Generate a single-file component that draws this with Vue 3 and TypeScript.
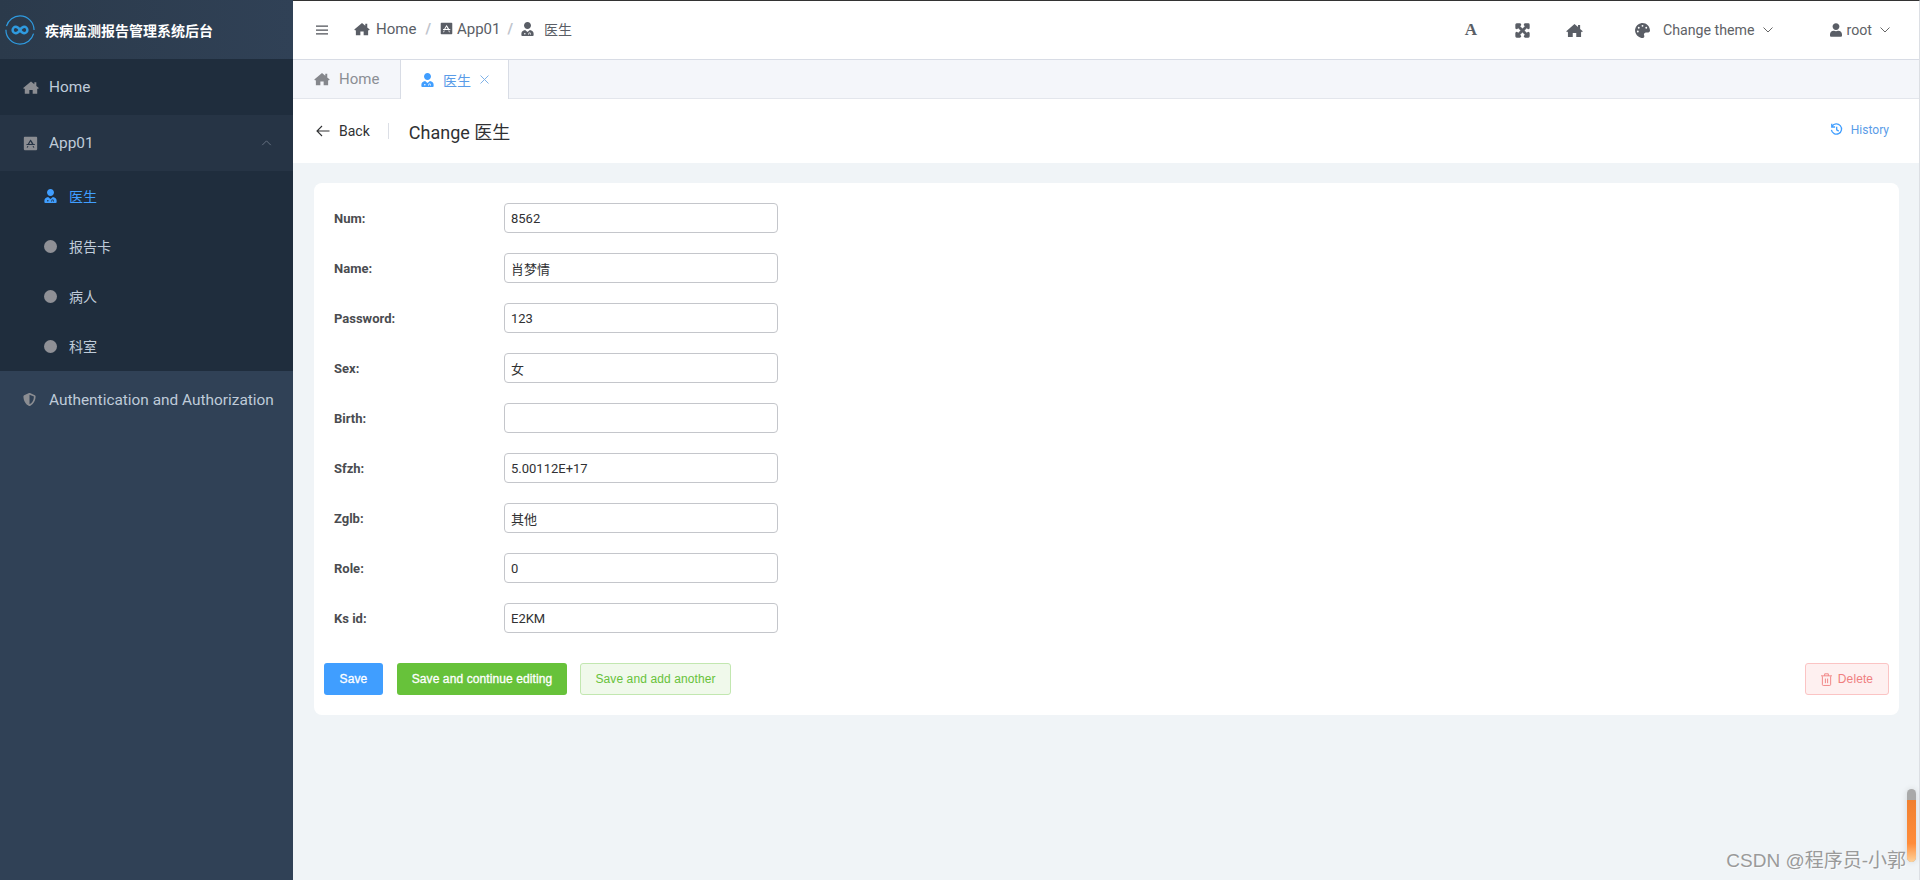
<script setup lang="ts">
const icons: Record<string, string> = {
  home: 'M288 36L6 278l30 35 28-24v191h164V344h120v136h164V289l28 24 30-35-90-77V64h-72v75z',
  user: 'M288 256c70.700 0 128-57.300 128-128S358.700 0 288 0 160 57.300 160 128s57.300 128 128 128zm89.600 32h-16.700c-22.200 10.200-46.900 16-72.900 16s-50.600-5.800-72.900-16h-16.700C124.200 288 64 348.200 64 422.400V464c0 26.500 21.500 48 48 48h352c26.500 0 48-21.500 48-48v-41.600c0-74.200-60.200-134.400-134.400-134.400z',
  doctor: 'M288 256c70.700 0 128-57.300 128-128S358.700 0 288 0 160 57.300 160 128s57.300 128 128 128zM200 296C120 310 64 360 64 430v50c0 18 14 32 32 32h384c18 0 32-14 32-32v-50c0-70-56-120-136-134l-88 74zM190 400a28 28 0 1 1 0 56 28 28 0 0 1 0-56zM320 470v-40c0-26 22-44 44-44s44 18 44 44v40h-24v-40c0-12-8-20-20-20s-20 8-20 20v40z',
  app: 'M64 32h448c18 0 32 14 32 32v448c0 18-14 32-32 32H64c-18 0-32-14-32-32V64c0-18 14-32 32-32zM288 130l-38 66-66 114h-50v40h320v-40h-50l-66-114zM288 210l52 100H236zM170 380l-30 70h36l34-70zM406 380h-40l34 70h36z',
  shield: 'M466.500 83.700l-192-80a48.150 48.150 0 0 0-36.900 0l-192 80C27.700 91.100 16 108.600 16 128c0 198.500 114.500 335.700 221.500 380.300 11.800 4.900 25.100 4.900 36.900 0C360.100 472.600 496 349.300 496 128c0-19.400-11.700-36.900-29.500-44.300zM256.100 446.300l-.1-381 175.900 73.300c-3.300 151.400-82.100 261.100-175.800 307.700z',
  expand: 'M448.100 344v112c0 13.300-10.700 24-24 24h-112c-21.400 0-32.100-25.900-17-41l36.200-36.200L224 295.600 116.800 402.900 153 439c15.100 15.100 4.400 41-17 41H24c-13.300 0-24-10.700-24-24V344c0-21.400 25.900-32.100 41-17l36.200 36.200L184.400 256 77.200 148.700 41 185c-15.100 15.100-41 4.400-41-17V56c0-13.300 10.700-24 24-24h112c21.400 0 32.100 25.900 17 41l-36.200 36.200L224 216.400l107.300-107.300L295.100 73c-15.100-15.100-4.400-41 17-41h112c13.300 0 24 10.700 24 24v112c0 21.400-25.900 32.100-41 17l-36.200-36.200L263.600 256l107.300 107.300 36.200-36.200c15.100-15.200 41-4.500 41 16.900z',
  palette: 'M204 5C104 24 24 104 6 203c-34 188 137 329 264 309 41-6 61-54 42-91-23-45 10-101 61-101h79c35 0 60-27 60-62C511 102 368-26 204 5zM96 320a32 32 0 1 1 0-64 32 32 0 0 1 0 64zm32-128a32 32 0 1 1 0-64 32 32 0 0 1 0 64zm128-64a32 32 0 1 1 0-64 32 32 0 0 1 0 64zm128 64a32 32 0 1 1 0-64 32 32 0 0 1 0 64z',
}

const subMenu = [
  { label: '医生', active: true },
  { label: '报告卡', active: false },
  { label: '病人', active: false },
  { label: '科室', active: false },
]

const fields = [
  { label: 'Num:', value: '8562' },
  { label: 'Name:', value: '肖梦情' },
  { label: 'Password:', value: '123' },
  { label: 'Sex:', value: '女' },
  { label: 'Birth:', value: '' },
  { label: 'Sfzh:', value: '5.00112E+17' },
  { label: 'Zglb:', value: '其他' },
  { label: 'Role:', value: '0' },
  { label: 'Ks id:', value: 'E2KM' },
]
</script>

<template>
  <div class="layout">
    <aside class="sidebar">
      <div class="logo">
        <svg class="logo-mark" viewBox="0 0 32 32" fill="none">
          <circle cx="16" cy="16" r="15" stroke="#2f9be0" stroke-width="1.300" stroke-dasharray="43 4.100" stroke-dashoffset="-4" />
          <path d="M16 16c-1.500-2.200-2.700-3.400-4.500-3.400a3.400 3.400 0 0 0 0 6.800c1.800 0 3-1.200 4.500-3.400s2.700-3.400 4.500-3.400a3.400 3.400 0 0 1 0 6.800c-1.800 0-3-1.200-4.500-3.400z" stroke="#2f9be0" stroke-width="2.600" />
        </svg>
        <span>疾病监测报告管理系统后台</span>
      </div>
      <div class="menu-item home">
        <svg class="menu-icon" viewBox="0 0 576 512"><path :d="icons.home" /></svg>
        <span>Home</span>
      </div>
      <div class="menu-item open">
        <svg class="menu-icon app" viewBox="0 0 576 576"><path :d="icons.app" fill-rule="evenodd" /></svg>
        <span>App01</span>
        <svg class="arrow" viewBox="0 0 12 7" fill="none"><path d="M1 6l5-5 5 5" stroke="#6f7b8a" /></svg>
      </div>
      <div class="submenu">
        <div v-for="item in subMenu" :key="item.label" class="sub-item" :class="{ active: item.active }">
          <svg v-if="item.active" class="sub-icon" viewBox="64 0 448 512"><path :d="icons.doctor" fill-rule="evenodd" /></svg>
          <i v-else class="dot"></i>
          <span>{{ item.label }}</span>
        </div>
      </div>
      <div class="menu-item auth">
        <svg class="menu-icon shield" viewBox="0 0 512 512"><path :d="icons.shield" /></svg>
        <span>Authentication and Authorization</span>
      </div>
    </aside>

    <main class="main">
      <header class="topbar">
        <svg class="burger" viewBox="0 0 12 12"><path d="M0 1.500h12v1.300H0zM0 5.400h12v1.300H0zM0 9.300h12v1.300H0z" /></svg>
        <nav class="crumbs">
          <svg class="crumb-icon" viewBox="0 0 576 512"><path :d="icons.home" /></svg>
          <span class="crumb-text">Home</span>
          <span class="sep first">/</span>
          <svg class="crumb-icon square" viewBox="0 0 576 576"><path :d="icons.app" fill-rule="evenodd" /></svg>
          <span class="crumb-text">App01</span>
          <span class="sep">/</span>
          <svg class="crumb-icon doc" viewBox="64 0 448 512"><path :d="icons.doctor" fill-rule="evenodd" /></svg>
          <span class="crumb-text cjk">医生</span>
        </nav>
        <div class="tools">
          <span class="font-a">A</span>
          <svg class="tool expand" viewBox="0 0 448 512"><path :d="icons.expand" /></svg>
          <svg class="tool house" viewBox="0 0 576 512"><path :d="icons.home" /></svg>
          <svg class="tool palette" viewBox="0 0 512 512"><path :d="icons.palette" fill-rule="evenodd" /></svg>
          <span class="tool-text">Change theme</span>
          <svg class="chev" viewBox="0 0 10 6" fill="none"><path d="M.5.500L5 5 9.500.500" stroke="#666" /></svg>
          <svg class="tool person" viewBox="64 0 448 512"><path :d="icons.user" /></svg>
          <span class="tool-text root">root</span>
          <svg class="chev" viewBox="0 0 10 6" fill="none"><path d="M.5.500L5 5 9.500.500" stroke="#666" /></svg>
        </div>
      </header>

      <div class="tabs">
        <div class="tab">
          <svg class="tab-icon" viewBox="0 0 576 512"><path :d="icons.home" /></svg>
          <span>Home</span>
        </div>
        <div class="tab current">
          <svg class="tab-icon small" viewBox="64 0 448 512"><path :d="icons.doctor" fill-rule="evenodd" /></svg>
          <span class="cjk">医生</span>
          <svg class="close" viewBox="0 0 9 9" fill="none"><path d="M.5.500l8 8M8.500.500l-8 8" stroke="#7fb2e8" /></svg>
        </div>
      </div>

      <div class="page-head">
        <svg class="back-arrow" viewBox="0 0 14 12" fill="none"><path d="M6 1L1 6l5 5M1 6h12.500" stroke="#303133" stroke-width="1.100" /></svg>
        <span class="back">Back</span>
        <i class="divider"></i>
        <span class="title">Change 医生</span>
        <div class="history">
          <svg class="history-icon" viewBox="0 0 14 14" fill="none">
            <path d="M2.300 3.500A5.500 5.500 0 1 1 1.500 7.500M5.500 4.300H1.900V.9M7.200 4v3.300l2.200 1.400" stroke="#409eff" stroke-width="1.400" />
          </svg>
          <span>History</span>
        </div>
      </div>

      <section class="content">
        <form class="card" @submit.prevent>
          <div v-for="field in fields" :key="field.label" class="row">
            <label>{{ field.label }}</label>
            <input type="text" :value="field.value" />
          </div>
          <div class="actions">
            <button class="btn primary">Save</button>
            <button class="btn success">Save and continue editing</button>
            <button class="btn plain">Save and add another</button>
            <button class="btn danger">
              <svg viewBox="0 0 12 14" fill="none"><path d="M1.500 3.500v9a1 1 0 0 0 1 1h7a1 1 0 0 0 1-1v-9M0 3h12M4 3V.8h4V3M4.800 6v5M7.200 6v5" stroke="#f07f7f" /></svg>
              <span>Delete</span>
            </button>
          </div>
        </form>
      </section>
    </main>

    <div class="scroll-widget"><i></i></div>
    <div class="watermark">CSDN @程序员-小郭</div>
  </div>
</template>

<style>
html,
body {
  margin: 0;
  height: 100%;
  overflow: hidden;
}
</style>

<style scoped>
.layout {
  display: flex;
  height: 880px;
  font-family: Roboto, "Noto Sans CJK SC", sans-serif;
  position: relative;
}

.sidebar {
  width: 293px;
  flex: none;
  background: #304156;
  color: #bfcbd9;
  font-size: 15.400px;
}

.logo {
  height: 59px;
  display: flex;
  align-items: center;
  padding-left: 5px;
  gap: 10px;
  background: linear-gradient(90deg, #2b3a4b, #304156);
  color: #fff;
  font-size: 14px;
  font-weight: 700;
}

.logo-mark {
  width: 30px;
  height: 30px;
}

.menu-item {
  height: 56px;
  display: flex;
  align-items: center;
  padding-left: 23px;
  box-sizing: border-box;
}

.menu-item.home {
  background: #1f2d3d;
}

.menu-item.open {
  background: #263445;
}

.menu-icon {
  width: 16px;
  height: 15px;
  fill: #8b8d92;
  margin-right: 10px;
  flex: none;
}

.menu-icon.app {
  width: 15px;
  height: 15px;
  margin-right: 11px;
}

.arrow {
  width: 11px;
  height: 6px;
  margin-left: auto;
  margin-right: 21px;
}

.submenu {
  background: #1f2d3d;
}

.sub-item {
  height: 50px;
  display: flex;
  align-items: center;
  padding-left: 44px;
  gap: 12px;
  font-size: 14px;
}

.sub-item.active {
  color: #409eff;
}

.sub-icon {
  width: 13px;
  height: 14px;
  fill: #409eff;
}

.dot {
  width: 13px;
  height: 13px;
  border-radius: 50%;
  background: #8f9096;
}

.menu-item.auth {
  height: 57px;
}

.shield {
  width: 13px;
  height: 13px;
  margin-right: 13px;
}

.main {
  flex: 1;
  min-width: 0;
  display: flex;
  flex-direction: column;
  background: #f0f4f7;
  border-top: 1px solid #333;
  border-right: 1px solid #dcdfe4;
}

.topbar {
  height: 58px;
  flex: none;
  display: flex;
  align-items: center;
  background: #fff;
  color: #5a5e66;
  border-bottom: 1px solid #d8dce5;
  padding-left: 23px;
}

.burger {
  width: 12px;
  height: 12px;
  fill: #4f5258;
}

.crumbs {
  display: flex;
  align-items: center;
  margin-left: 26px;
  font-size: 15px;
  margin-top: -3px;
}

.crumb-icon {
  width: 16px;
  height: 14px;
  fill: #5a5e66;
  margin-right: 6px;
}

.crumb-icon.square {
  width: 13px;
  height: 13px;
  margin-right: 4px;
}

.crumb-icon.doc {
  width: 13px;
  height: 14px;
  margin-right: 10px;
}

.crumb-text.cjk {
  font-size: 14px;
}

.sep {
  color: #c0c4cc;
  margin: 0 8px 0 7px;
  font-weight: 700;
}

.sep.first {
  margin: 0 9px;
}

.tools {
  margin-left: auto;
  display: flex;
  align-items: center;
  padding-right: 29px;
  font-size: 14.200px;
}

.font-a {
  font-family: "Liberation Serif", serif;
  font-weight: 700;
  font-size: 17px;
  color: #5a5e66;
  margin-right: 38px;
}

.tool {
  fill: #5a5e66;
  flex: none;
}

.expand {
  width: 15px;
  height: 15px;
  margin-right: 36px;
  stroke: #5a5e66;
  stroke-width: 40px;
}

.house {
  width: 17px;
  height: 15px;
  margin-right: 52px;
}

.palette {
  width: 15px;
  height: 15px;
  margin-right: 13px;
}

.tool-text {
  color: #606266;
}

.chev {
  width: 10px;
  height: 6px;
  margin-left: 8px;
}

.person {
  width: 12px;
  height: 14px;
  margin-left: 57px;
  margin-right: 5px;
}

.tabs {
  height: 38px;
  flex: none;
  display: flex;
  background: #f4f6fa;
  border-bottom: 1px solid #e3e6ec;
}

.tab {
  width: 107px;
  display: flex;
  align-items: center;
  padding-left: 21px;
  box-sizing: border-box;
  color: #8b8e94;
  font-size: 15px;
  gap: 9px;
}

.tab-icon {
  width: 16px;
  height: 14px;
  fill: #85878c;
}

.tab-icon.small {
  width: 13px;
  fill: #409eff;
}

.tab.current {
  width: 109px;
  background: #fff;
  color: #5a9ce8;
  border-left: 1px solid #d8dce5;
  border-right: 1px solid #d8dce5;
  height: 39px;
  gap: 9px;
  padding-left: 20px;
  font-size: 14px;
}

.close {
  width: 9px;
  height: 9px;
}

.page-head {
  height: 64px;
  flex: none;
  display: flex;
  align-items: center;
  background: #fff;
  padding: 0 30px 0 23px;
  color: #303133;
}

.back-arrow {
  width: 14px;
  height: 12px;
  margin-right: 9px;
}

.back {
  font-size: 14px;
}

.divider {
  width: 1px;
  height: 16px;
  background: #dcdfe6;
  margin: 0 20px 0 18px;
}

.title {
  font-size: 18px;
}

.history {
  margin-left: auto;
  margin-top: -3px;
  display: flex;
  align-items: center;
  gap: 8px;
  font-size: 12px;
  color: #5a9ce8;
}

.history-icon {
  width: 13px;
  height: 13px;
}

.content {
  flex: 1;
  padding: 20px 20px 0 21px;
}

.card {
  background: #fff;
  border-radius: 8px;
  padding: 20px 10px 20px 10px;
  box-sizing: border-box;
  height: 532px;
}

.row {
  display: flex;
  align-items: center;
  height: 30px;
  margin-bottom: 20px;
  padding-left: 10px;
}

.row label {
  width: 170px;
  font-size: 13px;
  font-weight: 700;
  color: #4a4c50;
}

.row input {
  width: 274px;
  height: 30px;
  box-sizing: border-box;
  border: 1px solid #c4c6cb;
  border-radius: 4px;
  padding: 0 6px;
  font: 13px Roboto, "Noto Sans CJK SC", sans-serif;
  color: #303133;
  background: #fff;
  outline: none;
}

.actions {
  display: flex;
  gap: 14px;
  margin-top: 30px;
}

.btn {
  height: 32px;
  border-radius: 3px;
  font: 12px "Liberation Sans", sans-serif;
  letter-spacing: 0.1px;
  border: 1px solid transparent;
  box-sizing: border-box;
  padding: 0;
}

.primary {
  width: 59px;
  background: #409eff;
  color: #fff;
  -webkit-text-stroke: 0.3px #fff;
}

.success {
  width: 170px;
  background: #67c23a;
  color: #fff;
  -webkit-text-stroke: 0.3px #fff;
}

.plain {
  width: 151px;
  margin-left: -1px;
  background: #f0f9eb;
  border-color: #c2e7b0;
  color: #67c23a;
}

.danger {
  width: 84px;
  margin-left: auto;
  background: #fef0f0;
  border-color: #fbc4c4;
  color: #f07f7f;
  display: flex;
  align-items: center;
  justify-content: center;
  gap: 6px;
}

.danger svg {
  width: 11px;
  height: 13px;
}

.scroll-widget {
  position: absolute;
  left: 1907px;
  top: 789px;
  width: 9px;
  height: 73px;
  border-radius: 5px;
  background: #a9a9a9;
  overflow: hidden;
  box-shadow: 0 0 6px rgba(0, 0, 0, 0.12);
}

.scroll-widget i {
  display: block;
  margin-top: 11px;
  height: 62px;
  background: linear-gradient(#f08030, #ff8c3a 70%, #ffd29a);
}

.watermark {
  position: absolute;
  right: 14px;
  bottom: 8px;
  font-family: "Liberation Sans", "Noto Sans CJK SC", sans-serif;
  font-size: 19px;
  color: #9a9a9a;
  text-shadow: 1px 1px 1px rgba(255, 255, 255, 0.7);
}
</style>
